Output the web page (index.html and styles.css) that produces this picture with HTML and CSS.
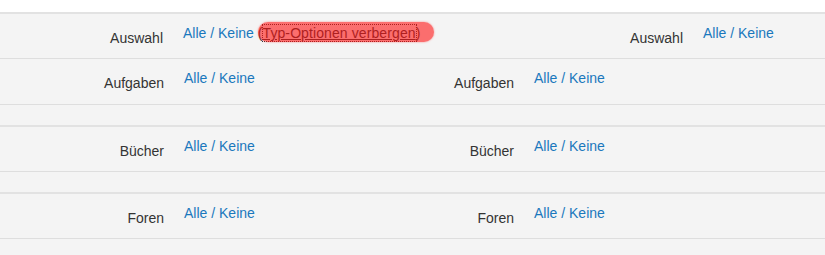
FILE: index.html
```html
<!DOCTYPE html>
<html lang="de">
<head>
<meta charset="utf-8">
<title>Filter</title>
<link rel="stylesheet" href="styles.css">
</head>
<body>
<div class="topstrip"></div>
<section class="group">
  <div class="row row-wide">
    <div class="label">Auswahl</div>
    <div class="value"><a href="#">Alle</a> / <a href="#">Keine</a> <span class="marked">(<a href="#" class="toggle">Typ-Optionen verbergen</a>)</span></div>
    <div class="label">Auswahl</div>
    <div class="value"><a href="#">Alle</a> / <a href="#">Keine</a></div>
  </div>
  <div class="row row-tall">
    <div class="label">Aufgaben</div>
    <div class="value"><a href="#">Alle</a> / <a href="#">Keine</a></div>
    <div class="label">Aufgaben</div>
    <div class="value"><a href="#">Alle</a> / <a href="#">Keine</a></div>
  </div>
</section>
<div class="spacer"></div>
<section class="group">
  <div class="row">
    <div class="label">Bücher</div>
    <div class="value"><a href="#">Alle</a> / <a href="#">Keine</a></div>
    <div class="label">Bücher</div>
    <div class="value"><a href="#">Alle</a> / <a href="#">Keine</a></div>
  </div>
</section>
<div class="spacer"></div>
<section class="group">
  <div class="row">
    <div class="label">Foren</div>
    <div class="value"><a href="#">Alle</a> / <a href="#">Keine</a></div>
    <div class="label">Foren</div>
    <div class="value"><a href="#">Alle</a> / <a href="#">Keine</a></div>
  </div>
</section>
</body>
</html>
```
FILE: styles.css
```css
html, body {
  margin: 0;
  padding: 0;
}
body {
  background: #f4f4f4;
  font-family: "Liberation Sans", Arial, sans-serif;
  font-size: 14px;
  color: #333;
}
.topstrip {
  height: 12px;
  background: #fff;
}
.group {
  border-top: 2px solid #e2e2e2;
}
.spacer {
  height: 20px;
}
.row {
  display: grid;
  grid-template-columns: 174px 177px 173px 1fr;
  height: 44px;
  border-bottom: 1px solid #dedede;
}
.row-wide {
  grid-template-columns: 173px 347px 173px 1fr;
}
.row-tall {
  height: 45px;
}
.label {
  text-align: right;
  padding: 16px 10px 0 0;
  white-space: nowrap;
}
.value {
  padding: 11px 0 0 10px;
  white-space: nowrap;
  color: #1a78bd;
}
.value a {
  color: #1a78bd;
  text-decoration: none;
}
.marked {
  position: relative;
  color: #333;
  letter-spacing: 0.1px;
}
.marked::after {
  content: "";
  position: absolute;
  left: 0;
  right: -14px;
  top: -3px;
  bottom: -1px;
  border-radius: 10px;
  background: rgba(255, 20, 20, 0.6);
  box-shadow: 0 0 2px rgba(255, 20, 20, 0.5);
}
.value a.toggle {
  color: #333;
  text-decoration: underline;
  outline: 1px dotted #333;
}
```
